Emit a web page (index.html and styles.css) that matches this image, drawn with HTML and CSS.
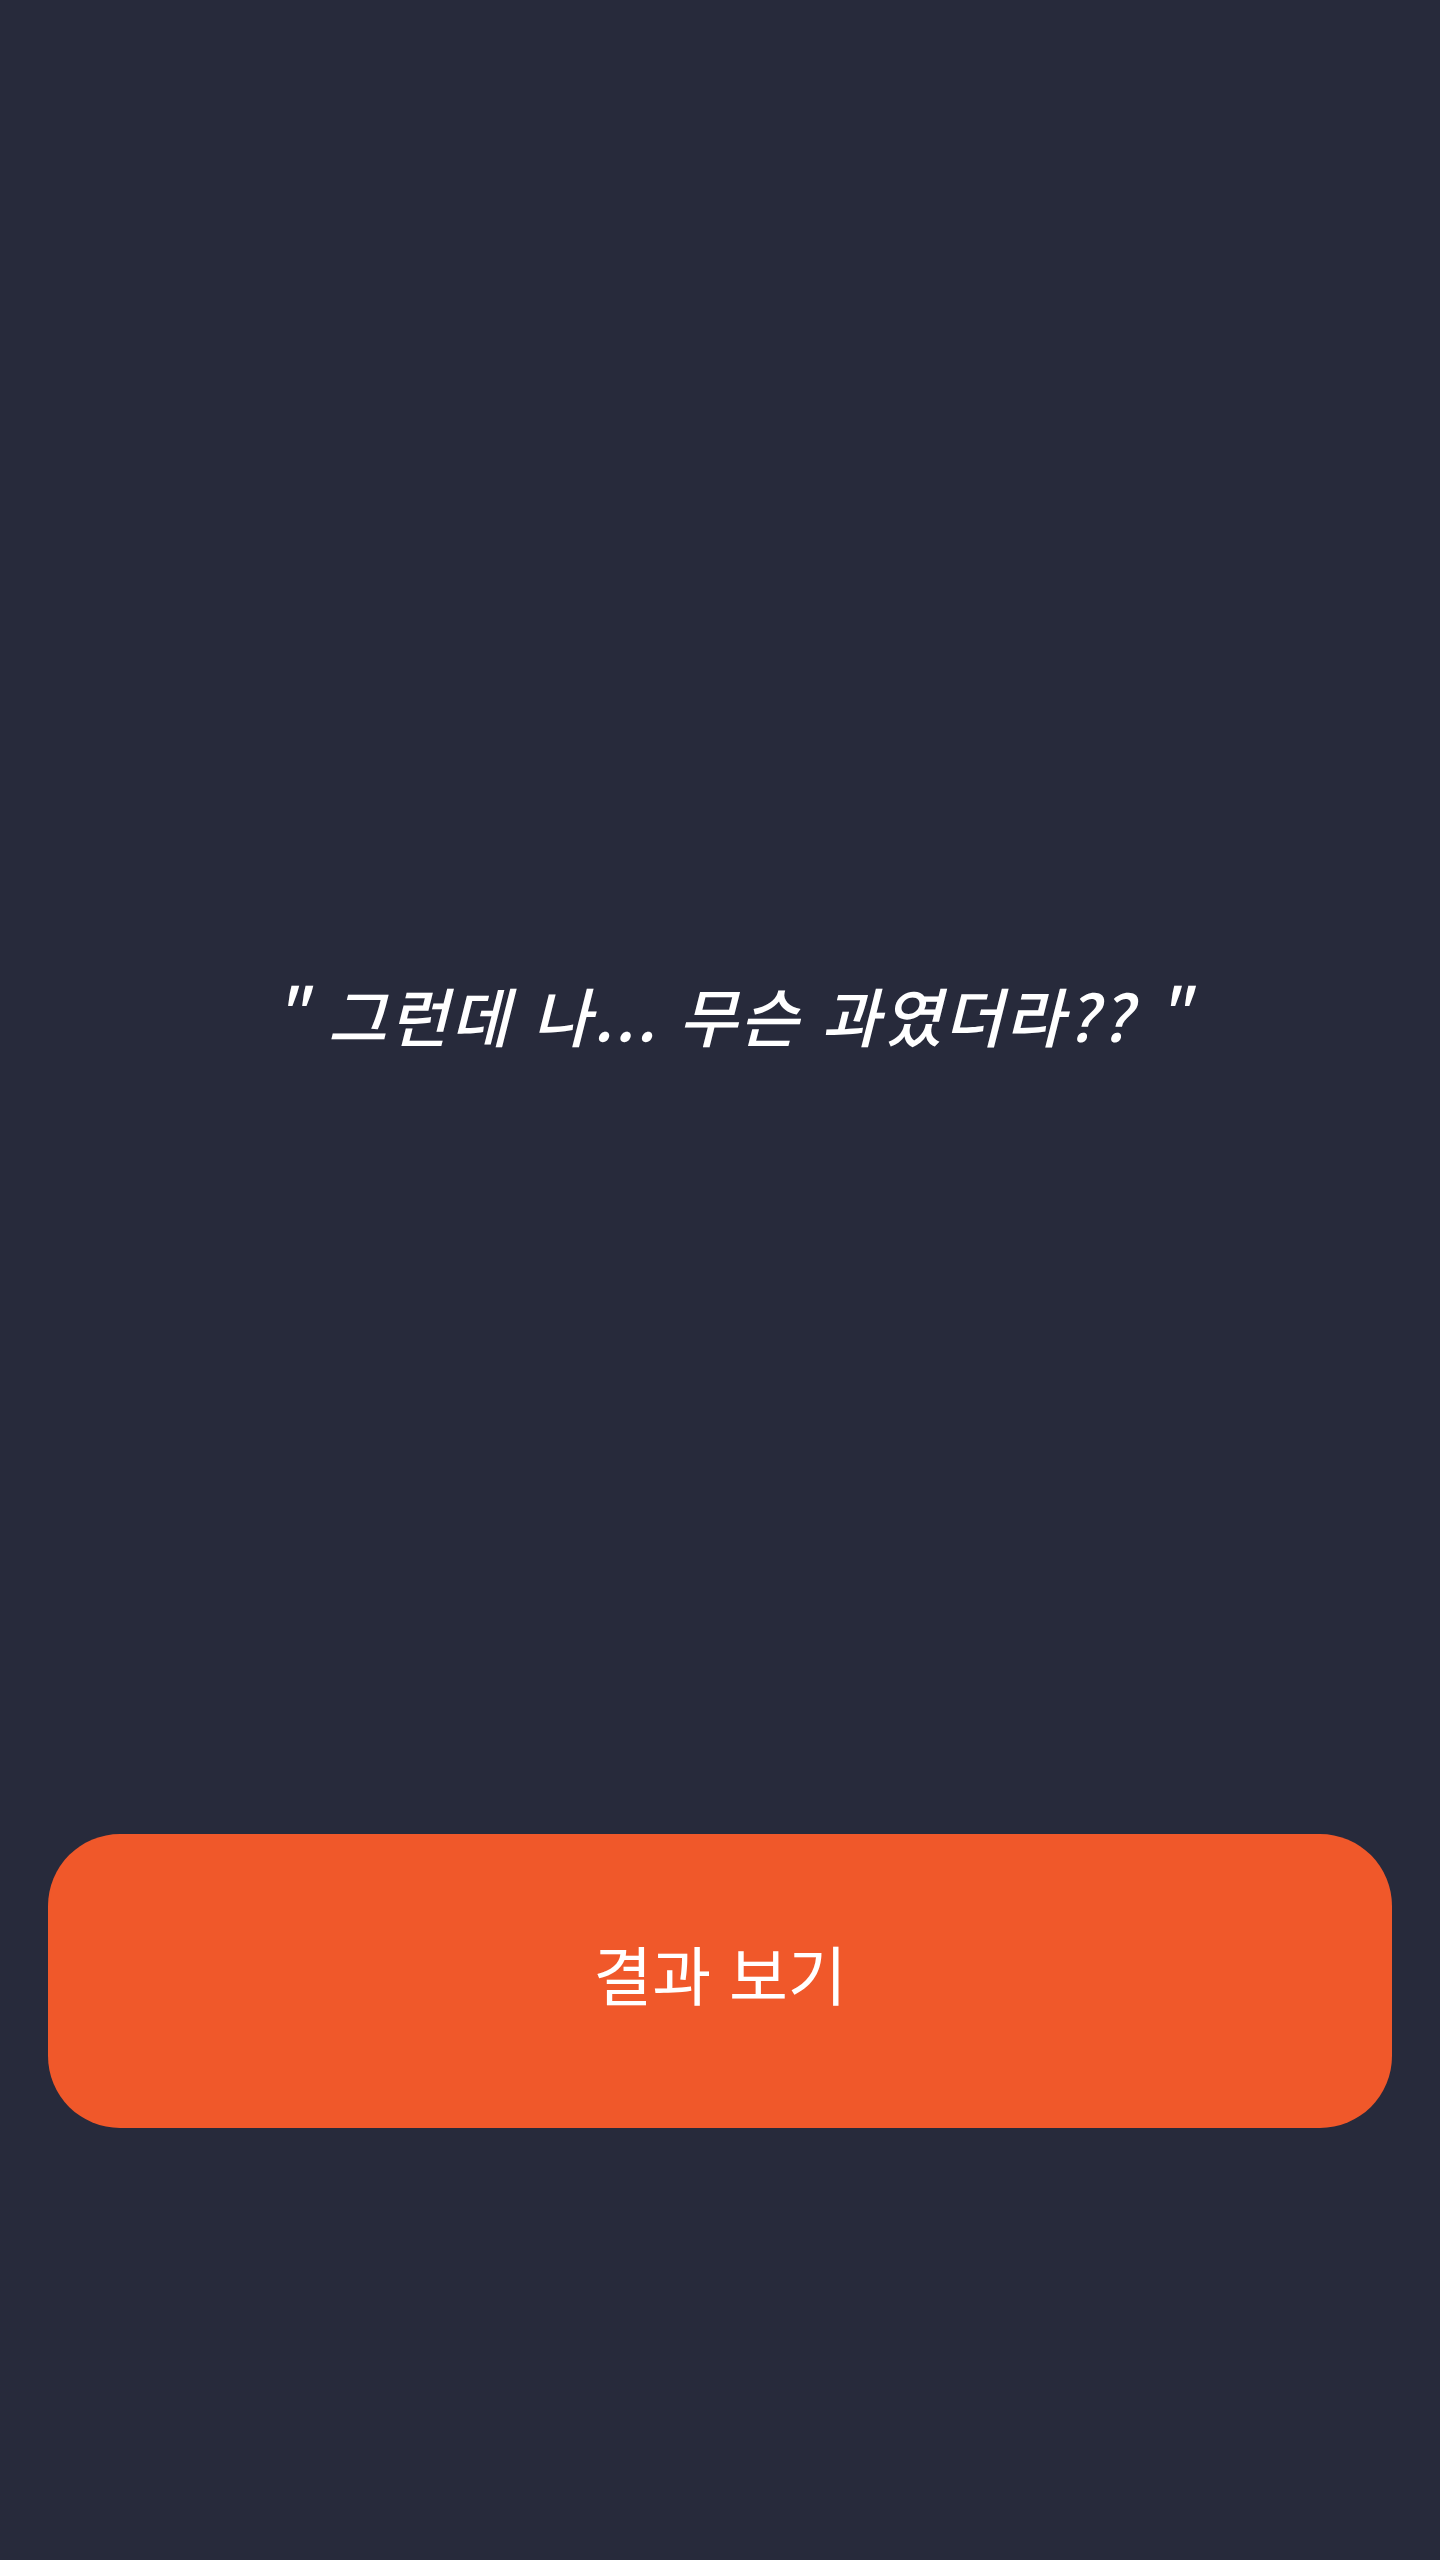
FILE: index.html
```html
<!DOCTYPE html>
<html lang="ko">
<head>
<meta charset="utf-8">
<title>결과 보기</title>
<link rel="stylesheet" href="styles.css">
</head>
<body>
<main class="screen">
  <section class="quote-area">
    <p class="quote">" 그런데 나... 무슨 과였더라?? "</p>
  </section>
  <section class="action-area">
    <button class="result-btn" type="button">결과 보기</button>
  </section>
</main>
</body>
</html>
```
FILE: styles.css
```css
* { box-sizing: border-box; }
html, body {
  margin: 0;
  padding: 0;
  background: #272a3b;
}
body {
  font-family: "Noto Sans CJK KR", "Noto Sans", sans-serif;
  color: #ffffff;
}
.screen {
  width: 1440px;
  height: 2560px;
  display: flex;
  flex-direction: column;
}
.quote-area {
  height: 1834px;
  padding-top: 194px;
  display: flex;
  align-items: center;
  justify-content: center;
}
.quote {
  margin: 0 0 0 22px;
  font-size: 64px;
  font-style: italic;
  font-weight: 500;
  line-height: 1.2;
  letter-spacing: 2.4px;
  white-space: nowrap;
}
.action-area {
  padding: 0 48px;
}
.result-btn {
  display: flex;
  align-items: center;
  justify-content: center;
  width: 100%;
  height: 294px;
  border: none;
  border-radius: 72px;
  background: #f0582a;
  color: #ffffff;
  font-family: "Noto Sans CJK KR", "Noto Sans", sans-serif;
  font-size: 64px;
  font-weight: 400;
  padding: 0 0 18px;
}
```
